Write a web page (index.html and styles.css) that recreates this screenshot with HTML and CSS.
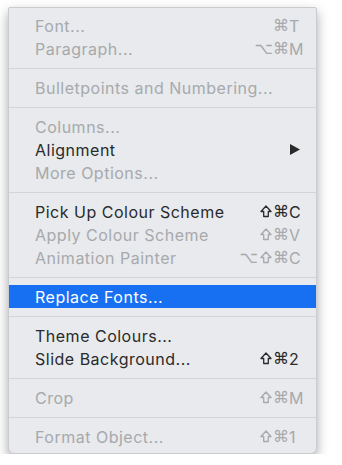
FILE: index.html
```html
<!DOCTYPE html>
<html lang="en">
<head>
    <meta charset="UTF-8">
    <title>Format Menu</title>
    <link rel="stylesheet" href="styles.css">
</head>
<body>
    <div class="menu">
        <div class="item off"><span class="label">Font...</span><span class="keys"><span class="mods">⌘</span><span class="key">T</span></span></div>
        <div class="item off"><span class="label">Paragraph...</span><span class="keys"><span class="mods">⌥⌘</span><span class="key">M</span></span></div>
        <div class="sep"></div>
        <div class="item off"><span class="label">Bulletpoints and Numbering...</span></div>
        <div class="sep"></div>
        <div class="item off"><span class="label">Columns...</span></div>
        <div class="item"><span class="label">Alignment</span>
            <span class="keys"><span class="key"><svg class="arrow" width="10" height="11" viewBox="0 0 10 11"><path d="M0 0 L10 5.5 L0 11 Z"/></svg></span></span>
        </div>
        <div class="item off"><span class="label">More Options...</span></div>
        <div class="sep"></div>
        <div class="item"><span class="label">Pick Up Colour Scheme</span><span class="keys"><svg class="shift" width="12" height="13" viewBox="0 0 12 13"><path d="M6 1 L11 6.5 H8.3 V11.5 H3.7 V6.5 H1 Z"/></svg><span class="mods">⌘</span><span class="key">C</span></span></div>
        <div class="item off"><span class="label">Apply Colour Scheme</span><span class="keys"><svg class="shift" width="12" height="13" viewBox="0 0 12 13"><path d="M6 1 L11 6.5 H8.3 V11.5 H3.7 V6.5 H1 Z"/></svg><span class="mods">⌘</span><span class="key">V</span></span></div>
        <div class="item off"><span class="label">Animation Painter</span><span class="keys"><span class="mods">⌥</span><svg class="shift" width="12" height="13" viewBox="0 0 12 13"><path d="M6 1 L11 6.5 H8.3 V11.5 H3.7 V6.5 H1 Z"/></svg><span class="mods">⌘</span><span class="key">C</span></span></div>
        <div class="sep"></div>
        <div class="item active"><span class="label">Replace Fonts...</span></div>
        <div class="sep"></div>
        <div class="item"><span class="label">Theme Colours...</span></div>
        <div class="item"><span class="label">Slide Background...</span><span class="keys"><svg class="shift" width="12" height="13" viewBox="0 0 12 13"><path d="M6 1 L11 6.5 H8.3 V11.5 H3.7 V6.5 H1 Z"/></svg><span class="mods">⌘</span><span class="key">2</span></span></div>
        <div class="sep"></div>
        <div class="item off"><span class="label">Crop</span><span class="keys"><svg class="shift" width="12" height="13" viewBox="0 0 12 13"><path d="M6 1 L11 6.5 H8.3 V11.5 H3.7 V6.5 H1 Z"/></svg><span class="mods">⌘</span><span class="key">M</span></span></div>
        <div class="sep"></div>
        <div class="item off"><span class="label">Format Object...</span><span class="keys"><svg class="shift" width="12" height="13" viewBox="0 0 12 13"><path d="M6 1 L11 6.5 H8.3 V11.5 H3.7 V6.5 H1 Z"/></svg><span class="mods">⌘</span><span class="key">1</span></span></div>
    </div>
</body>
</html>
```

FILE: styles.css
```css
/* Page */
body {
    margin: 0;
    padding: 7px 0 0 8px;
    background-color: #fff;
    font-family: Inter, "Liberation Sans", Arial, sans-serif;
}

/* Menu panel */
.menu {
    width: 307px;
    padding: 6px 0 5px;
    background-color: #e8eaed;
    border: 1px solid #c9cbce;
    border-radius: 2px 2px 6px 6px;
    box-shadow: 0 5px 12px rgba(0, 0, 0, 0.35);
    display: flex;
    flex-direction: column;
}

/* Menu rows */
.item {
    height: 23px;
    padding: 0 9px 0 26px;
    display: flex;
    align-items: center;
    justify-content: space-between;
    font-size: 16px;
    letter-spacing: 0.5px;
    color: #2a2a2b;
}

.item.off {
    color: #a7a9ac;
}

.item.active {
    background-color: #176ff1;
    color: #fff;
}

/* Shortcut column */
.keys {
    display: flex;
    align-items: center;
}

.mods {
    font-family: "DejaVu Sans", sans-serif;
    font-size: 16px;
    letter-spacing: 0;
}

.shift {
    fill: none;
    stroke: currentColor;
    stroke-width: 1.3;
    stroke-linejoin: round;
    margin: 0 1px 0 2px;
}

.key {
    width: 18px;
    display: flex;
    align-items: center;
}

.arrow {
    fill: #2a2a2b;
    margin-left: 1px;
}

/* Separator */
.sep {
    height: 1px;
    margin: 8px 0 7px;
    background-color: #d2d4d7;
}
```
